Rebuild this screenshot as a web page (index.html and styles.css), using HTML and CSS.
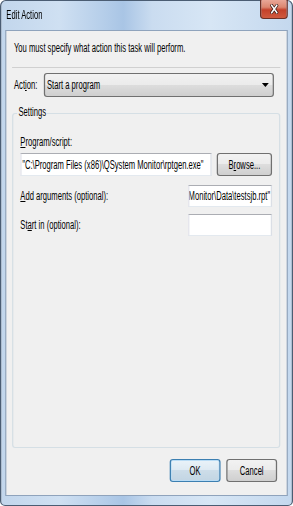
FILE: index.html
```html
<!DOCTYPE html>
<html lang="en">
<head>
    <meta charset="UTF-8">
    <meta name="viewport" content="width=device-width, initial-scale=1.0">
    <title>Edit Action</title>
    <link rel="stylesheet" href="styles.css">
</head>
<body>
    <div class="screen">
        <!-- the dialog is drawn at its natural width and squeezed horizontally to fit -->
        <div class="window">
            <div class="titlebar">
                <span class="title">Edit Action</span>
                <button class="close-btn" aria-label="Close">
                    <svg width="15" height="10" viewBox="0 0 15 10">
                        <path d="M3.5 1.5 L11.5 8.5 M11.5 1.5 L3.5 8.5" stroke="#3a1d18" stroke-width="3.8" stroke-linecap="square"/>
                        <path d="M3.5 1.5 L11.5 8.5 M11.5 1.5 L3.5 8.5" stroke="#fff" stroke-width="2" stroke-linecap="square"/>
                    </svg>
                </button>
            </div>

            <div class="client">
                <p class="message">You must specify what action this task will perform.</p>
                <div class="separator"></div>

                <div class="action-row">
                    <label class="action-label">Act<u>i</u>on:</label>
                    <div class="select">
                        <span>Start a program</span>
                        <svg class="arrow" width="11" height="4" viewBox="0 0 11 4">
                            <path d="M0 0 H11 L5.5 4 Z" fill="#000"/>
                        </svg>
                    </div>
                </div>

                <div class="group">
                    <div class="group-title">Settings</div>

                    <label class="field-label"><u>P</u>rogram/script:</label>
                    <div class="program-row">
                        <input class="textbox program" type="text" value='"C:\Program Files (x86)\QSystem Monitor\rptgen.exe"'>
                        <button class="btn browse">B<u>r</u>owse...</button>
                    </div>

                    <div class="option-row">
                        <label><u>A</u>dd arguments (optional):</label>
                        <div class="textbox small scrolled"><span>Monitor\Data\testsjb.rpt"</span></div>
                    </div>
                    <div class="option-row second">
                        <label>St<u>a</u>rt in (optional):</label>
                        <input class="textbox small" type="text">
                    </div>
                </div>

                <div class="footer">
                    <button class="btn default">OK</button>
                    <button class="btn">Cancel</button>
                </div>
            </div>
        </div>
    </div>
</body>
</html>
```

FILE: styles.css
```css
* {
    margin: 0;
    padding: 0;
    box-sizing: border-box;
}

body {
    overflow: hidden;
    background-color: #fff;
    font-family: "Liberation Sans", Arial, sans-serif;
    font-size: 12px;
    color: #000;
}

.screen {
    width: 293px;
    height: 506px;
    overflow: hidden;
}

.window {
    width: 461px;
    height: 506px;
    display: flex;
    flex-direction: column;
    padding: 0 6px 9px;
    border: solid #4b5d73;
    border-width: 1px 2px;
    border-radius: 9px 9px 8px 8px / 6px 6px 5px 5px;
    background: linear-gradient(90deg, #c2d6ec 0%, #cfe0f2 20%, #b4cde9 36%, #a9c5e5 42%, #cadcf0 52%, #d7e6f5 72%, #c4d8ee 100%);
    transform: scaleX(0.6356);
    transform-origin: 0 0;
}

.titlebar {
    height: 29px;
    display: flex;
    justify-content: space-between;
    align-items: flex-start;
}

.title {
    margin-top: 7px;
    padding-left: 2px;
    line-height: 14px;
}

.close-btn {
    width: 44px;
    height: 19px;
    margin-top: -1px;
    display: flex;
    align-items: center;
    justify-content: center;
    border: solid #6b2f25;
    border-width: 0 2px 1px;
    border-radius: 0 0 6px 6px / 0 0 4px 4px;
    background: linear-gradient(#e9a797 0%, #dc8670 40%, #c4412a 55%, #cf5a3f 100%);
}

.client {
    flex: 1;
    display: flex;
    flex-direction: column;
    padding: 10px 10px 13px 9px;
    background-color: #f0f0f0;
    border: solid #8fa3bc;
    border-width: 1px 2px;
}

.message {
    margin-bottom: 12px;
    padding-left: 3px;
    line-height: 14px;
}

.separator {
    height: 1px;
    background-color: #d0d0d0;
}

.action-row {
    display: flex;
    align-items: center;
    margin-top: 5px;
    padding: 0 10px 0 3px;
}

.action-label {
    width: 47px;
    line-height: 14px;
}

.select {
    flex: 1;
    height: 24px;
    display: flex;
    align-items: center;
    justify-content: space-between;
    padding: 0 6px 0 3px;
    border: solid #707070;
    border-width: 1px 2px;
    border-radius: 5px / 3px;
    background: linear-gradient(#f2f2f2 0%, #ebebeb 50%, #dddddd 50%, #cfcfcf 100%);
}

.group {
    flex: 1;
    margin-top: 16px;
    padding: 0 11px;
    border: solid #d5dfe5;
    border-width: 1px 2px;
    border-radius: 5px / 3px;
}

.group-title {
    width: fit-content;
    margin: -9px 0 0 -5px;
    padding: 0 2px;
    line-height: 14px;
    background-color: #f0f0f0;
}

.field-label {
    display: block;
    margin-top: 16px;
    line-height: 14px;
}

.program-row {
    display: flex;
    align-items: center;
    gap: 8px;
    margin-top: 4px;
}

.textbox {
    height: 23px;
    padding: 0 1px;
    font: inherit;
    color: #000;
    background-color: #fff;
    border: solid;
    border-width: 1px 2px;
    border-color: #abadb3 #dbdfe6 #e3e9ef #e2e3ea;
    outline: none;
}

.textbox.program {
    flex: 1;
    min-width: 0;
}

.textbox.small {
    width: 132px;
    height: 22px;
}

.textbox.scrolled {
    display: flex;
    align-items: center;
    justify-content: flex-end;
    overflow: hidden;
    white-space: nowrap;
    padding-right: 1px;
}

.option-row {
    display: flex;
    align-items: center;
    justify-content: space-between;
    margin-top: 9px;
    line-height: 14px;
}

.option-row.second {
    margin-top: 7px;
}

.btn {
    width: 80px;
    height: 23px;
    font: inherit;
    color: #000;
    border: solid #707070;
    border-width: 1px 2px;
    border-radius: 5px / 3px;
    background: linear-gradient(#f2f2f2 0%, #ebebeb 50%, #dddddd 50%, #cfcfcf 100%);
}

.btn.browse {
    width: 87px;
}

.btn.default {
    border-color: #3c7fb1;
    background: linear-gradient(#eaf3f9 0%, #dde9f2 50%, #cddde9 50%, #c2d5e3 100%);
    box-shadow: inset 0 0 0 1px #b9dcf5;
}

.footer {
    display: flex;
    justify-content: flex-end;
    gap: 9px;
    margin-top: 11px;
    padding-right: 5px;
}
```
